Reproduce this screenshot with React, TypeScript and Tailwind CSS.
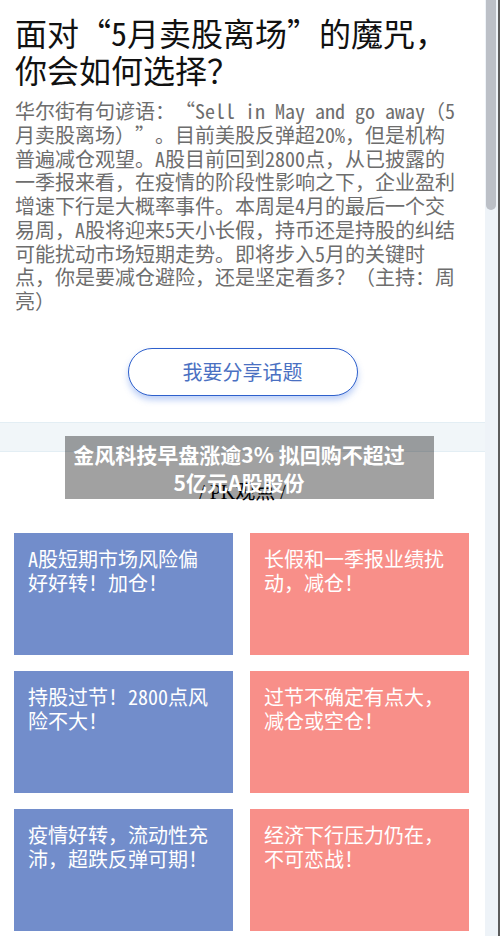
import React from 'react';

const cards = [
  { text: 'A股短期市场风险偏好好转！加仓！', side: 'bull' },
  { text: '长假和一季报业绩扰动，减仓！', side: 'bear' },
  { text: '持股过节！2800点风险不大！', side: 'bull' },
  { text: '过节不确定有点大，减仓或空仓！', side: 'bear' },
  { text: '疫情好转，流动性充沛，超跌反弹可期！', side: 'bull' },
  { text: '经济下行压力仍在，不可恋战！', side: 'bear' },
];

function Q({ children }: { children: React.ReactNode }) {
  return <span className="[font-variant-east-asian:full-width]">{children}</span>;
}

export default function App() {
  return (
    <div className="relative flex h-[936px] w-[500px] overflow-hidden bg-white font-['Noto_Sans_Mono_CJK_SC','Noto_Sans_CJK_SC',monospace] [text-spacing-trim:space-all]">
      <main className="flex w-[485px] flex-col">
        {/* Topic header */}
        <section className="pt-[14px]">
          <h1 className="pl-[15px] pr-[25px] text-[32px] leading-[37px] text-[#111]">
            面对<Q>“</Q>5月卖股离场<Q>”</Q>的魔咒，你会如何选择？
          </h1>
          <p className="mt-[11px] pl-[15px] pr-[25px] text-[20px] leading-[23.75px] text-[#6d6d6d]">
            华尔街有句谚语：<Q>“</Q>Sell in May and go away（5月卖股离场）<Q>”</Q>。目前美股反弹超20%，但是机构普遍减仓观望。A股目前回到2800点，从已披露的一季报来看，在疫情的阶段性影响之下，企业盈利增速下行是大概率事件。本周是4月的最后一个交易周，A股将迎来5天小长假，持币还是持股的纠结可能扰动市场短期走势。即将步入5月的关键时点，你是要减仓避险，还是坚定看多？（主持：周亮）
          </p>
          <div className="mt-[35px] flex justify-center">
            <button className="h-[48px] w-[230px] rounded-full border border-[#2e60cc] bg-white text-[20px] text-[#4a70c2] shadow-[0_4px_6px_rgba(70,120,230,0.35)]">
              我要分享话题
            </button>
          </div>
        </section>

        <div className="mt-[26px] h-[30px] border-y border-[#e3eef4] bg-[#f1f6f9]" />

        {/* PK section */}
        <section className="pt-[26px]">
          <h2 className="text-center font-['Liberation_Serif','Noto_Sans_CJK_SC',serif] text-[20px] leading-[28px] text-black">
            / PK观点 /
          </h2>
          <div className="mt-[27px] grid grid-cols-2 gap-x-[17px] gap-y-[16px] pl-[14px] pr-[16px]">
            {cards.map((c) => (
              <div
                key={c.text}
                className={
                  'h-[122px] pl-[14px] pr-[20px] pt-[14px] text-[20px] leading-[24px] text-white ' +
                  (c.side === 'bull' ? 'bg-[#728dcb]' : 'bg-[#f88f89]')
                }
              >
                {c.text}
              </div>
            ))}
          </div>
        </section>
      </main>

      {/* scroll rail */}
      <div className="flex w-[15px] border-r-2 border-[#5c5c5c] bg-[#eef3f8]">
        <div className="ml-[1px] h-[210px] w-[10px] rounded-b-[5px] bg-[#bcc0c7]" />
      </div>

      {/* news caption overlay */}
      <div className="absolute left-[65px] top-[436px] flex h-[63px] w-[369px] flex-col items-center justify-center bg-black/[0.37] pr-[21px] font-['Noto_Sans_CJK_SC',sans-serif] text-[21px] font-bold leading-[28px] text-white">
        <span>金风科技早盘涨逾3% 拟回购不超过</span>
        <span>5亿元A股股份</span>
      </div>
    </div>
  );
}
